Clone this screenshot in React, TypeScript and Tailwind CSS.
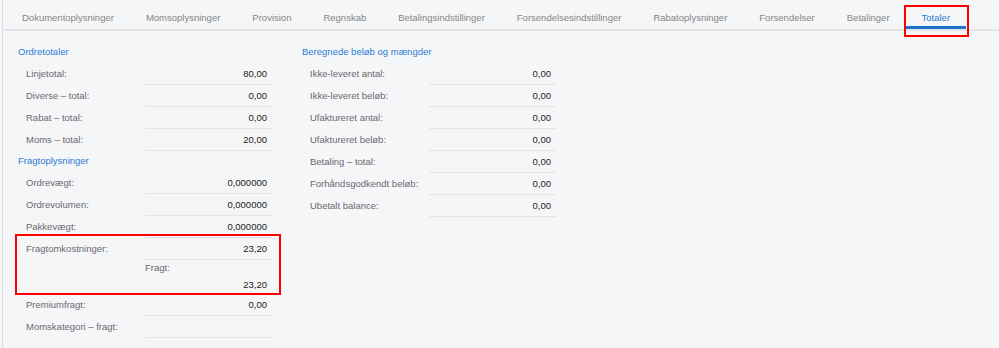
const tabs = [
  'Dokumentoplysninger',
  'Momsoplysninger',
  'Provision',
  'Regnskab',
  'Betalingsindstillinger',
  'Forsendelsesindstillinger',
  'Rabatoplysninger',
  'Forsendelser',
  'Betalinger',
  'Totaler',
]

const ordre = [
  ['Linjetotal:', '80,00'],
  ['Diverse – total:', '0,00'],
  ['Rabat – total:', '0,00'],
  ['Moms – total:', '20,00'],
]

const fragt = [
  ['Ordrevægt:', '0,000000'],
  ['Ordrevolumen:', '0,000000'],
  ['Pakkevægt:', '0,000000'],
]

const beregnede = [
  ['Ikke-leveret antal:', '0,00'],
  ['Ikke-leveret beløb:', '0,00'],
  ['Ufaktureret antal:', '0,00'],
  ['Ufaktureret beløb:', '0,00'],
  ['Betaling – total:', '0,00'],
  ['Forhåndsgodkendt beløb:', '0,00'],
  ['Ubetalt balance:', '0,00'],
]

const Heading = ({ children }: { children: string }) => (
  <div className="h-[21px] flex items-center text-[#2b7cd3] whitespace-nowrap">{children}</div>
)

const Row = ({ label, value }: { label: string; value: string }) => (
  <div className="flex h-[22px] pl-2">
    <div className="w-[119px] flex items-center text-[#6b6870] whitespace-nowrap">{label}</div>
    <div className="w-[127px] flex items-center justify-end pr-[5px] pt-[2px] text-[#222] border-b border-[#e3e4e6]">
      {value}
    </div>
  </div>
)

export default function App() {
  return (
    <div
      className="min-h-screen w-full bg-[#f5f6f8] pl-[2px] text-[9.5px]"
      style={{ fontFamily: '"Liberation Sans", Arial, sans-serif' }}
    >
      <div className="min-h-[348px] border-l border-[#dcdde0]">
        {/* Tabs */}
        <div className="flex h-[31px] pl-[3px] border-b-2 border-[#e2e4e7]">
          {tabs.map((t) => {
            const active = t === 'Totaler'
            return (
              <div
                key={t}
                className={
                  active
                    ? 'relative px-4 h-[29px] pt-[7px] flex items-center text-[#2b7cd3] border-b-[3px] border-[#1a73cf] whitespace-nowrap'
                    : 'px-4 h-[29px] pt-[7px] flex items-center text-[#858585] whitespace-nowrap'
                }
              >
                <span className={active ? 'mt-[3px]' : ''}>{t}</span>
                {active && (
                  <div className="absolute -left-[2px] -right-[3px] top-[5px] -bottom-[11px] border-2 border-[#f00]" />
                )}
              </div>
            )
          })}
        </div>

        {/* Content */}
        <div className="flex gap-[30px] pl-[15px] pt-[11px]">
          <div className="w-[254px]">
            <Heading>Ordretotaler</Heading>
            {ordre.map(([l, v]) => (
              <Row key={l} label={l} value={v} />
            ))}
            <Heading>Fragtoplysninger</Heading>
            {fragt.map(([l, v]) => (
              <Row key={l} label={l} value={v} />
            ))}
            <div className="relative">
              <Row label="Fragtomkostninger:" value="23,20" />
              <div className="flex pl-2">
                <div className="w-[119px]" />
                <div className="w-[127px]">
                  <div className="h-[17px] flex items-center text-[#6b6870]">Fragt:</div>
                  <div className="h-[17px] flex items-center justify-end pr-[5px] text-[#222]">23,20</div>
                </div>
              </div>
              <div className="absolute -left-[3px] -right-[9px] -top-[4px] -bottom-[1px] border-2 border-[#f00]" />
            </div>
            <Row label="Premiumfragt:" value="0,00" />
            <Row label="Momskategori – fragt:" value="" />
          </div>

          <div className="w-[254px]">
            <Heading>Beregnede beløb og mængder</Heading>
            {beregnede.map(([l, v]) => (
              <Row key={l} label={l} value={v} />
            ))}
          </div>
        </div>
      </div>
    </div>
  )
}
